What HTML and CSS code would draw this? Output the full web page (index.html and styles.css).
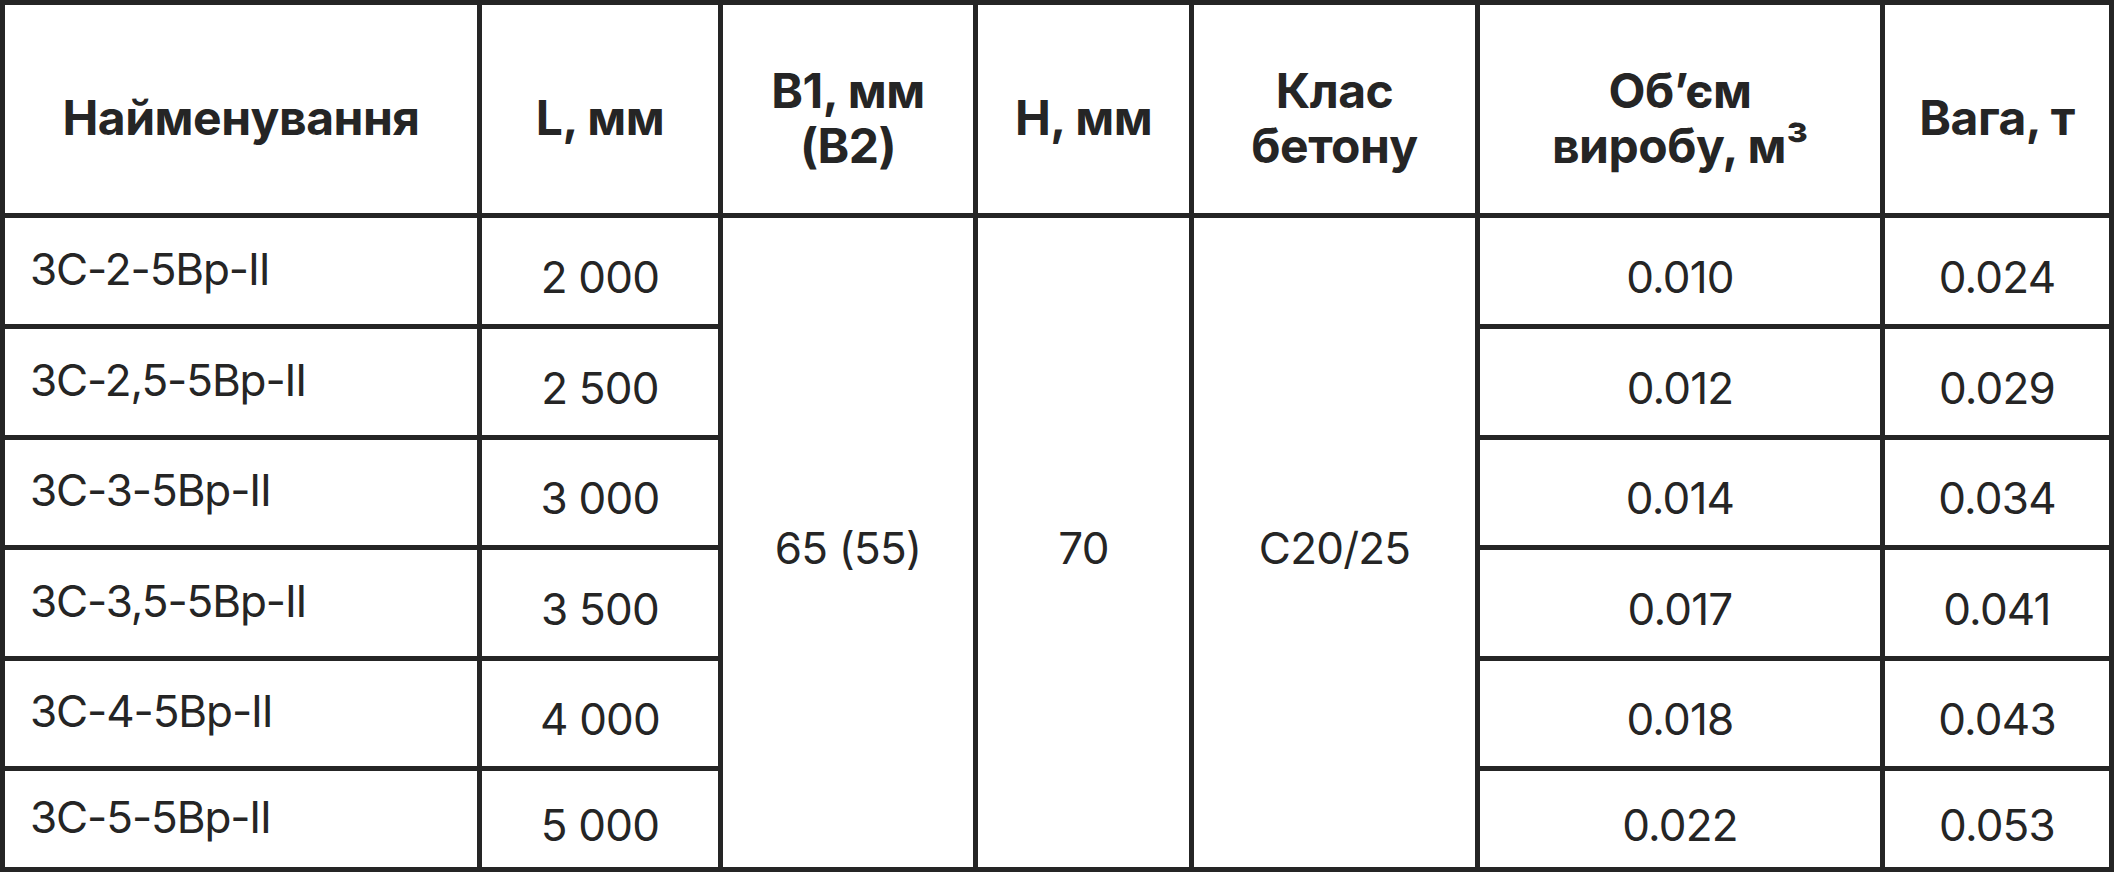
FILE: index.html
```html
<!DOCTYPE html>
<html lang="uk">
<head>
<meta charset="utf-8">
<title>Стійки</title>
<link rel="stylesheet" href="styles.css">
</head>
<body>
<div class="spec" role="table">
  <div class="cell head" role="columnheader">Найменування</div>
  <div class="cell head" role="columnheader">L, мм</div>
  <div class="cell head" role="columnheader">B1, мм<br>(B2)</div>
  <div class="cell head" role="columnheader">H, мм</div>
  <div class="cell head" role="columnheader">Клас<br>бетону</div>
  <div class="cell head" role="columnheader">Об’єм<br>виробу, м³</div>
  <div class="cell head" role="columnheader">Вага, т</div>

  <div class="cell name r2">ЗС-2-5Вр-ІІ</div>
  <div class="cell num r2 c2">2 000</div>
  <div class="cell num merged c3">65 (55)</div>
  <div class="cell num merged c4">70</div>
  <div class="cell num merged c5">C20/25</div>
  <div class="cell num r2 c6">0.010</div>
  <div class="cell num r2 c7">0.024</div>

  <div class="cell name r3">ЗС-2,5-5Вр-ІІ</div>
  <div class="cell num r3 c2">2 500</div>
  <div class="cell num r3 c6">0.012</div>
  <div class="cell num r3 c7">0.029</div>

  <div class="cell name r4">ЗС-3-5Вр-ІІ</div>
  <div class="cell num r4 c2">3 000</div>
  <div class="cell num r4 c6">0.014</div>
  <div class="cell num r4 c7">0.034</div>

  <div class="cell name r5">ЗС-3,5-5Вр-ІІ</div>
  <div class="cell num r5 c2">3 500</div>
  <div class="cell num r5 c6">0.017</div>
  <div class="cell num r5 c7">0.041</div>

  <div class="cell name r6">ЗС-4-5Вр-ІІ</div>
  <div class="cell num r6 c2">4 000</div>
  <div class="cell num r6 c6">0.018</div>
  <div class="cell num r6 c7">0.043</div>

  <div class="cell name r7">ЗС-5-5Вр-ІІ</div>
  <div class="cell num r7 c2">5 000</div>
  <div class="cell num r7 c6">0.022</div>
  <div class="cell num r7 c7">0.053</div>
</div>
</body>
</html>
```

FILE: styles.css
```css
html, body {
  margin: 0;
  padding: 0;
  background: #ffffff;
}

.spec {
  display: grid;
  width: 2114px;
  height: 872px;
  box-sizing: border-box;
  padding: 5px;
  gap: 5px;
  background: #252525;
  grid-template-columns: 472px 236px 250px 211px 281px 400px 224px;
  grid-template-rows: 208px 106px 106px 105px 106px 105px 96px;
  font-family: "Inter", "Noto Sans", sans-serif;
  color: #252525;
}

.cell {
  background: #ffffff;
  display: flex;
  align-items: center;
  justify-content: center;
  text-align: center;
  box-sizing: border-box;
}

.head {
  font-size: 48px;
  font-weight: 700;
  line-height: 55px;
  letter-spacing: -0.5px;
  padding-top: 17px;
}

.num {
  font-size: 44px;
  font-weight: 400;
  line-height: 1.2;
  letter-spacing: -0.8px;
  padding-top: 12px;
}

.name {
  font-size: 44px;
  font-weight: 400;
  line-height: 1.2;
  letter-spacing: -1.1px;
  justify-content: flex-start;
  text-align: left;
  padding-left: 25px;
  padding-bottom: 4px;
  grid-column: 1;
}

.merged { grid-row: 2 / 8; }

.c2 { grid-column: 2; }
.c3 { grid-column: 3; }
.c4 { grid-column: 4; }
.c5 { grid-column: 5; }
.c6 { grid-column: 6; }
.c7 { grid-column: 7; }

.r2 { grid-row: 2; }
.r3 { grid-row: 3; }
.r4 { grid-row: 4; }
.r5 { grid-row: 5; }
.r6 { grid-row: 6; }
.r7 { grid-row: 7; }
```
